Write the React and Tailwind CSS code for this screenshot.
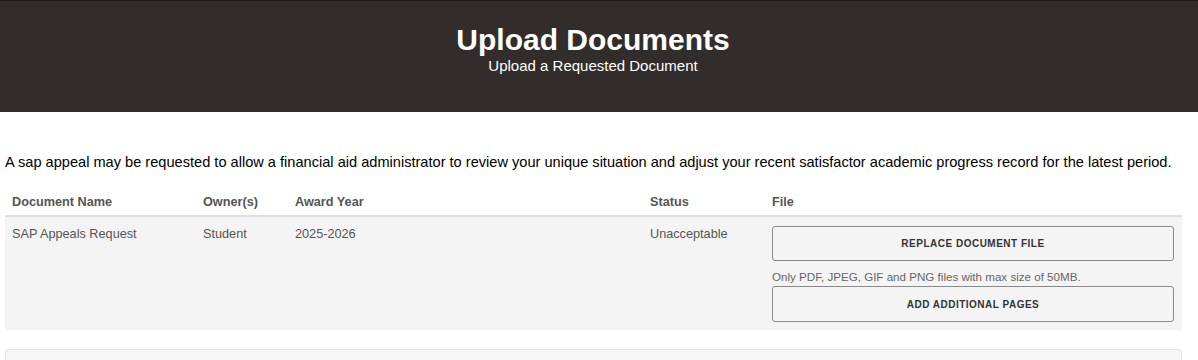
export default function App() {
  const rows = [
    { name: 'SAP Appeals Request', owner: 'Student', year: '2025-2026', status: 'Unacceptable' },
  ];

  return (
    <div className="min-h-[360px] bg-white" style={{ fontFamily: '"Liberation Sans", Arial, sans-serif' }}>
      {/* Page header */}
      <div className="h-[112px] bg-[#322d2a] border-t border-[#1c1917] pr-[12px] text-center text-white">
        <h1 className="pt-[22px] text-[30px] font-bold leading-[34px]">Upload Documents</h1>
        <p className="text-[15px] leading-[18px]">Upload a Requested Document</p>
      </div>

      <div className="pl-[5px] pr-[16px]">
        <p className="mt-[41px] whitespace-nowrap text-[14.6px] leading-[18px] text-black">
          A sap appeal may be requested to allow a financial aid administrator to review your unique situation and adjust your recent satisfactor academic progress record for the latest period.
        </p>

        <table className="mt-[19px] w-full border-collapse text-[12.7px] text-[#555]">
          <thead>
            <tr className="border-b-2 border-[#dedede] text-left">
              <th className="w-[191px] h-[26px] px-[7px] py-0 align-middle font-bold">Document Name</th>
              <th className="w-[92px] px-[7px] font-bold">Owner(s)</th>
              <th className="w-[355px] px-[7px] font-bold">Award Year</th>
              <th className="w-[122px] px-[7px] font-bold">Status</th>
              <th className="px-[7px] font-bold">File</th>
            </tr>
          </thead>
          <tbody>
            {rows.map(row => (
              <tr key={row.name} className="bg-[#f4f4f4] align-top">
                <td className="px-[7px] pt-[8px]">{row.name}</td>
                <td className="px-[7px] pt-[8px]">{row.owner}</td>
                <td className="px-[7px] pt-[8px]">{row.year}</td>
                <td className="px-[7px] pt-[8px]">{row.status}</td>
                <td className="pl-[7px] pr-[8px] pt-[9px] pb-[8px]">
                  <button className="flex h-[35px] w-full items-center justify-center rounded-[3px] border border-[#8a8a8a] bg-[#f4f4f4] text-[10px] font-bold uppercase tracking-[0.5px] text-[#333]">
                    Replace Document File
                  </button>
                  <p className="mt-[9px] text-[11.6px] leading-[14px] text-[#666]">Only PDF, JPEG, GIF and PNG files with max size of 50MB.</p>
                  <button className="mt-[2px] flex h-[36px] w-full items-center justify-center rounded-[3px] border border-[#8a8a8a] bg-[#f4f4f4] text-[10px] font-bold uppercase tracking-[0.5px] text-[#333]">
                    Add Additional Pages
                  </button>
                </td>
              </tr>
            ))}
          </tbody>
        </table>

        <div className="mt-[19px] h-[40px] rounded-[3px] border border-[#e6e6e6] bg-[#f6f6f6]" />
      </div>
    </div>
  );
}
